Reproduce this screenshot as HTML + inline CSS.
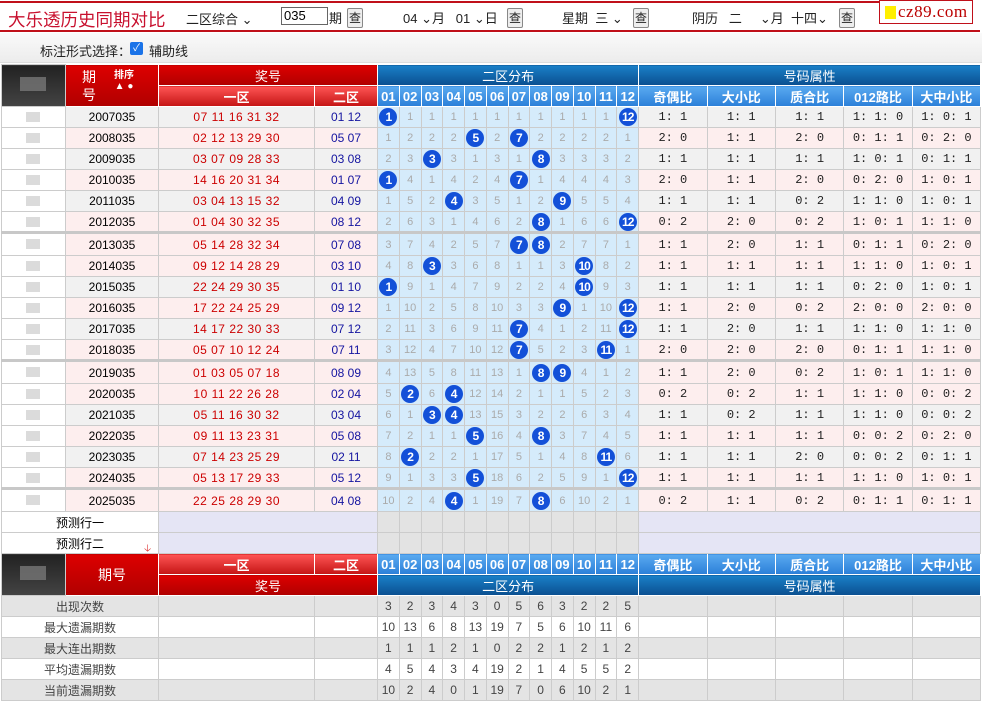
<!DOCTYPE html>
<html><head><meta charset="utf-8"><style>
*{margin:0;padding:0;box-sizing:border-box}
body{width:982px;height:702px;background:#fff;font-family:"Liberation Sans","Noto Sans CJK SC",sans-serif;position:relative;overflow:hidden;font-size:12px;color:#000}
.top{position:absolute;left:0;top:0;width:982px;height:33px;background:#fff}
.rl1{position:absolute;left:0;top:1px;width:880px;height:2px;background:#c0101a}
.rl2{position:absolute;left:0;top:30px;width:980px;height:2px;background:#c0101a}
.t{position:absolute;white-space:nowrap;font-size:13px;color:#222}
.title{position:absolute;left:8px;top:7px;font-size:17.5px;color:#c8102e}
.btn{position:absolute;width:16px;height:20px;border:1px solid #888;border-radius:2px;background:#eee;font-size:12px;text-align:center;line-height:18px;color:#222}
.inp{position:absolute;left:281px;top:7px;width:47px;height:18px;border:1px solid #666;font-size:13px;line-height:16px;padding-left:2px}
.logo{position:absolute;left:879px;top:0;width:94px;height:24px;border:1px solid #c0101a;background:#fff;overflow:hidden}
.logo i{position:absolute;left:5px;top:5px;width:11px;height:13px;background:#ffef00}
.logo span{position:absolute;left:18px;top:1px;font-family:"Liberation Serif",serif;font-size:17px;color:#b00;letter-spacing:0.5px}
.bar2{position:absolute;left:0;top:33px;width:982px;height:30px;background:linear-gradient(#fafafa,#ececec);border-bottom:1px solid #ddd}
.chk{position:absolute;left:130px;top:42px;width:13px;height:13px;background:#1a73e8;border-radius:2px;color:#fff;font-size:10px;line-height:13px;text-align:center}
table{position:absolute;left:1px;top:64px;border-collapse:collapse;table-layout:fixed;width:979px}
td{height:21px;border:1px solid #ccc;text-align:center;padding:0;font-size:12px;white-space:nowrap;overflow:hidden}
.dk{background:linear-gradient(#222,#444);position:relative}
.dk span{position:absolute;left:18px;top:12px;width:26px;height:14px;background:#777;opacity:.8}
.hr{background:linear-gradient(#d00,#b00000);color:#fff;font-size:13px;border-color:#fff}
.hr2{background:linear-gradient(#f55,#c41414);color:#fff;font-size:13px;font-weight:bold;border-color:#fff}
.hb{background:linear-gradient(#1a80c8,#0a4f90);color:#fff;font-size:13px;border-color:#fff}
.hb2{background:linear-gradient(#5aaaf0,#2b7fd8);color:#fff;font-size:13px;font-weight:bold;border-color:#fff}
.qh{position:relative}
.qh .a{position:absolute;left:16px;top:3px;font-size:14px;line-height:18px;color:#fff}
.qh .s{position:absolute;left:48px;top:5px;font-size:10px;font-weight:bold;color:#fff;line-height:11px}
tr.p td{background:#fdeeee}
tr.g td{background:#f1f1f1}
tr.p td:nth-child(n+5):nth-child(-n+16),tr.g td:nth-child(n+5):nth-child(-n+16){background:#d5ebfb;color:#aaa;font-size:11px}
tr.s td{border-top:3px solid #c8c8c8;height:23px}
td.a{background:#fff!important;position:relative}
td.a span{position:absolute;left:24px;top:5px;width:14px;height:10px;background:#ccc;opacity:.7}
.r{color:#c00;letter-spacing:.5px}
.n{color:#1414a0}
b{display:inline-block;width:18px;height:18px;border-radius:50%;background:#1350d8;color:#fff;font-size:12px;line-height:18px;font-weight:bold;vertical-align:middle;letter-spacing:-1px}
.m{font-family:"Liberation Mono",monospace;font-size:12px;color:#222}
.lv{background:#e5e5f5}
.gy{background:#e3e3e3}
tr.w td{background:#fff}
tr.x td{background:#e4e4e4}
tr.w td,tr.x td{color:#444}
</style></head><body>
<div class="top"></div>
<div class="rl1"></div><div class="rl2"></div>
<div class="title">大乐透历史同期对比</div>
<div class="t" style="left:186px;top:9px">二区综合 ⌄</div>
<div class="inp">035</div>
<div class="t" style="left:329px;top:8px">期</div>
<div class="btn" style="left:347px;top:8px">查</div>
<div class="t" style="left:403px;top:8px">04 ⌄月&nbsp;&nbsp;&nbsp;01 ⌄日</div>
<div class="btn" style="left:507px;top:8px">查</div>
<div class="t" style="left:562px;top:8px">星期&nbsp;&nbsp;三 ⌄</div>
<div class="btn" style="left:633px;top:8px">查</div>
<div class="t" style="left:692px;top:8px">阴历&nbsp;&nbsp;&nbsp;二&nbsp;&nbsp;&nbsp;&nbsp;&nbsp;⌄月&nbsp;&nbsp;十四⌄</div>
<div class="btn" style="left:839px;top:8px">查</div>
<div class="logo"><i></i><span>cz89.com</span></div>
<div class="bar2"></div>
<div class="t" style="left:40px;top:41px">标注形式选择：</div>
<div class="chk">✓</div>
<div class="t" style="left:149px;top:41px">辅助线</div>
<table>
<colgroup><col style="width:64px"><col style="width:93px"><col style="width:156px"><col style="width:63px">
<col span="12" style="width:21.75px"><col span="5" style="width:68.4px"></colgroup>
<tr><td class="dk" rowspan="2"><span></span></td><td class="hr qh" rowspan="2"><span class="a">期<br>号</span><span class="s">排序<br>▲ ●</span></td><td class="hr" colspan="2">奖号</td><td class="hb" colspan="12">二区分布</td><td class="hb" colspan="5">号码属性</td></tr>
<tr><td class="hr2">一区</td><td class="hr2">二区</td><td class="hb2">01</td><td class="hb2">02</td><td class="hb2">03</td><td class="hb2">04</td><td class="hb2">05</td><td class="hb2">06</td><td class="hb2">07</td><td class="hb2">08</td><td class="hb2">09</td><td class="hb2">10</td><td class="hb2">11</td><td class="hb2">12</td><td class="hb2">奇偶比</td><td class="hb2">大小比</td><td class="hb2">质合比</td><td class="hb2">012路比</td><td class="hb2">大中小比</td></tr>
<tr class="g"><td class="a"><span></span></td><td>2007035</td><td class="r">07 11 16 31 32</td><td class="n">01 12</td><td><b>1</b></td><td>1</td><td>1</td><td>1</td><td>1</td><td>1</td><td>1</td><td>1</td><td>1</td><td>1</td><td>1</td><td><b>12</b></td><td class="m">1: 1</td><td class="m">1: 1</td><td class="m">1: 1</td><td class="m">1: 1: 0</td><td class="m">1: 0: 1</td></tr>
<tr class="p"><td class="a"><span></span></td><td>2008035</td><td class="r">02 12 13 29 30</td><td class="n">05 07</td><td>1</td><td>2</td><td>2</td><td>2</td><td><b>5</b></td><td>2</td><td><b>7</b></td><td>2</td><td>2</td><td>2</td><td>2</td><td>1</td><td class="m">2: 0</td><td class="m">1: 1</td><td class="m">2: 0</td><td class="m">0: 1: 1</td><td class="m">0: 2: 0</td></tr>
<tr class="g"><td class="a"><span></span></td><td>2009035</td><td class="r">03 07 09 28 33</td><td class="n">03 08</td><td>2</td><td>3</td><td><b>3</b></td><td>3</td><td>1</td><td>3</td><td>1</td><td><b>8</b></td><td>3</td><td>3</td><td>3</td><td>2</td><td class="m">1: 1</td><td class="m">1: 1</td><td class="m">1: 1</td><td class="m">1: 0: 1</td><td class="m">0: 1: 1</td></tr>
<tr class="p"><td class="a"><span></span></td><td>2010035</td><td class="r">14 16 20 31 34</td><td class="n">01 07</td><td><b>1</b></td><td>4</td><td>1</td><td>4</td><td>2</td><td>4</td><td><b>7</b></td><td>1</td><td>4</td><td>4</td><td>4</td><td>3</td><td class="m">2: 0</td><td class="m">1: 1</td><td class="m">2: 0</td><td class="m">0: 2: 0</td><td class="m">1: 0: 1</td></tr>
<tr class="g"><td class="a"><span></span></td><td>2011035</td><td class="r">03 04 13 15 32</td><td class="n">04 09</td><td>1</td><td>5</td><td>2</td><td><b>4</b></td><td>3</td><td>5</td><td>1</td><td>2</td><td><b>9</b></td><td>5</td><td>5</td><td>4</td><td class="m">1: 1</td><td class="m">1: 1</td><td class="m">0: 2</td><td class="m">1: 1: 0</td><td class="m">1: 0: 1</td></tr>
<tr class="p"><td class="a"><span></span></td><td>2012035</td><td class="r">01 04 30 32 35</td><td class="n">08 12</td><td>2</td><td>6</td><td>3</td><td>1</td><td>4</td><td>6</td><td>2</td><td><b>8</b></td><td>1</td><td>6</td><td>6</td><td><b>12</b></td><td class="m">0: 2</td><td class="m">2: 0</td><td class="m">0: 2</td><td class="m">1: 0: 1</td><td class="m">1: 1: 0</td></tr>
<tr class="p s"><td class="a"><span></span></td><td>2013035</td><td class="r">05 14 28 32 34</td><td class="n">07 08</td><td>3</td><td>7</td><td>4</td><td>2</td><td>5</td><td>7</td><td><b>7</b></td><td><b>8</b></td><td>2</td><td>7</td><td>7</td><td>1</td><td class="m">1: 1</td><td class="m">2: 0</td><td class="m">1: 1</td><td class="m">0: 1: 1</td><td class="m">0: 2: 0</td></tr>
<tr class="p"><td class="a"><span></span></td><td>2014035</td><td class="r">09 12 14 28 29</td><td class="n">03 10</td><td>4</td><td>8</td><td><b>3</b></td><td>3</td><td>6</td><td>8</td><td>1</td><td>1</td><td>3</td><td><b>10</b></td><td>8</td><td>2</td><td class="m">1: 1</td><td class="m">1: 1</td><td class="m">1: 1</td><td class="m">1: 1: 0</td><td class="m">1: 0: 1</td></tr>
<tr class="g"><td class="a"><span></span></td><td>2015035</td><td class="r">22 24 29 30 35</td><td class="n">01 10</td><td><b>1</b></td><td>9</td><td>1</td><td>4</td><td>7</td><td>9</td><td>2</td><td>2</td><td>4</td><td><b>10</b></td><td>9</td><td>3</td><td class="m">1: 1</td><td class="m">1: 1</td><td class="m">1: 1</td><td class="m">0: 2: 0</td><td class="m">1: 0: 1</td></tr>
<tr class="p"><td class="a"><span></span></td><td>2016035</td><td class="r">17 22 24 25 29</td><td class="n">09 12</td><td>1</td><td>10</td><td>2</td><td>5</td><td>8</td><td>10</td><td>3</td><td>3</td><td><b>9</b></td><td>1</td><td>10</td><td><b>12</b></td><td class="m">1: 1</td><td class="m">2: 0</td><td class="m">0: 2</td><td class="m">2: 0: 0</td><td class="m">2: 0: 0</td></tr>
<tr class="g"><td class="a"><span></span></td><td>2017035</td><td class="r">14 17 22 30 33</td><td class="n">07 12</td><td>2</td><td>11</td><td>3</td><td>6</td><td>9</td><td>11</td><td><b>7</b></td><td>4</td><td>1</td><td>2</td><td>11</td><td><b>12</b></td><td class="m">1: 1</td><td class="m">2: 0</td><td class="m">1: 1</td><td class="m">1: 1: 0</td><td class="m">1: 1: 0</td></tr>
<tr class="p"><td class="a"><span></span></td><td>2018035</td><td class="r">05 07 10 12 24</td><td class="n">07 11</td><td>3</td><td>12</td><td>4</td><td>7</td><td>10</td><td>12</td><td><b>7</b></td><td>5</td><td>2</td><td>3</td><td><b>11</b></td><td>1</td><td class="m">2: 0</td><td class="m">2: 0</td><td class="m">2: 0</td><td class="m">0: 1: 1</td><td class="m">1: 1: 0</td></tr>
<tr class="p s"><td class="a"><span></span></td><td>2019035</td><td class="r">01 03 05 07 18</td><td class="n">08 09</td><td>4</td><td>13</td><td>5</td><td>8</td><td>11</td><td>13</td><td>1</td><td><b>8</b></td><td><b>9</b></td><td>4</td><td>1</td><td>2</td><td class="m">1: 1</td><td class="m">2: 0</td><td class="m">0: 2</td><td class="m">1: 0: 1</td><td class="m">1: 1: 0</td></tr>
<tr class="p"><td class="a"><span></span></td><td>2020035</td><td class="r">10 11 22 26 28</td><td class="n">02 04</td><td>5</td><td><b>2</b></td><td>6</td><td><b>4</b></td><td>12</td><td>14</td><td>2</td><td>1</td><td>1</td><td>5</td><td>2</td><td>3</td><td class="m">0: 2</td><td class="m">0: 2</td><td class="m">1: 1</td><td class="m">1: 1: 0</td><td class="m">0: 0: 2</td></tr>
<tr class="g"><td class="a"><span></span></td><td>2021035</td><td class="r">05 11 16 30 32</td><td class="n">03 04</td><td>6</td><td>1</td><td><b>3</b></td><td><b>4</b></td><td>13</td><td>15</td><td>3</td><td>2</td><td>2</td><td>6</td><td>3</td><td>4</td><td class="m">1: 1</td><td class="m">0: 2</td><td class="m">1: 1</td><td class="m">1: 1: 0</td><td class="m">0: 0: 2</td></tr>
<tr class="p"><td class="a"><span></span></td><td>2022035</td><td class="r">09 11 13 23 31</td><td class="n">05 08</td><td>7</td><td>2</td><td>1</td><td>1</td><td><b>5</b></td><td>16</td><td>4</td><td><b>8</b></td><td>3</td><td>7</td><td>4</td><td>5</td><td class="m">1: 1</td><td class="m">1: 1</td><td class="m">1: 1</td><td class="m">0: 0: 2</td><td class="m">0: 2: 0</td></tr>
<tr class="g"><td class="a"><span></span></td><td>2023035</td><td class="r">07 14 23 25 29</td><td class="n">02 11</td><td>8</td><td><b>2</b></td><td>2</td><td>2</td><td>1</td><td>17</td><td>5</td><td>1</td><td>4</td><td>8</td><td><b>11</b></td><td>6</td><td class="m">1: 1</td><td class="m">1: 1</td><td class="m">2: 0</td><td class="m">0: 0: 2</td><td class="m">0: 1: 1</td></tr>
<tr class="p"><td class="a"><span></span></td><td>2024035</td><td class="r">05 13 17 29 33</td><td class="n">05 12</td><td>9</td><td>1</td><td>3</td><td>3</td><td><b>5</b></td><td>18</td><td>6</td><td>2</td><td>5</td><td>9</td><td>1</td><td><b>12</b></td><td class="m">1: 1</td><td class="m">1: 1</td><td class="m">1: 1</td><td class="m">1: 1: 0</td><td class="m">1: 0: 1</td></tr>
<tr class="p s"><td class="a"><span></span></td><td>2025035</td><td class="r">22 25 28 29 30</td><td class="n">04 08</td><td>10</td><td>2</td><td>4</td><td><b>4</b></td><td>1</td><td>19</td><td>7</td><td><b>8</b></td><td>6</td><td>10</td><td>2</td><td>1</td><td class="m">0: 2</td><td class="m">1: 1</td><td class="m">0: 2</td><td class="m">0: 1: 1</td><td class="m">0: 1: 1</td></tr>
<tr><td colspan="2" style="text-align:center">预测行一</td><td class="lv" colspan="2"></td><td class="gy"></td><td class="gy"></td><td class="gy"></td><td class="gy"></td><td class="gy"></td><td class="gy"></td><td class="gy"></td><td class="gy"></td><td class="gy"></td><td class="gy"></td><td class="gy"></td><td class="gy"></td><td class="lv" colspan="5"></td></tr>
<tr><td colspan="2" style="text-align:center;position:relative">预测行二<span style="position:absolute;left:142px;top:8px;color:#d33;font-size:10px">🡣</span></td><td class="lv" colspan="2"></td><td class="gy"></td><td class="gy"></td><td class="gy"></td><td class="gy"></td><td class="gy"></td><td class="gy"></td><td class="gy"></td><td class="gy"></td><td class="gy"></td><td class="gy"></td><td class="gy"></td><td class="gy"></td><td class="lv" colspan="5"></td></tr>
<tr><td class="dk" rowspan="2"><span></span></td><td class="hr" rowspan="2" style="font-size:14px">期号</td><td class="hr2">一区</td><td class="hr2">二区</td><td class="hb2">01</td><td class="hb2">02</td><td class="hb2">03</td><td class="hb2">04</td><td class="hb2">05</td><td class="hb2">06</td><td class="hb2">07</td><td class="hb2">08</td><td class="hb2">09</td><td class="hb2">10</td><td class="hb2">11</td><td class="hb2">12</td><td class="hb2">奇偶比</td><td class="hb2">大小比</td><td class="hb2">质合比</td><td class="hb2">012路比</td><td class="hb2">大中小比</td></tr>
<tr><td class="hr" colspan="2">奖号</td><td class="hb" colspan="12">二区分布</td><td class="hb" colspan="5">号码属性</td></tr>
<tr class="x"><td colspan="2">出现次数</td><td></td><td></td><td>3</td><td>2</td><td>3</td><td>4</td><td>3</td><td>0</td><td>5</td><td>6</td><td>3</td><td>2</td><td>2</td><td>5</td><td></td><td></td><td></td><td></td><td></td></tr>
<tr class="w"><td colspan="2">最大遗漏期数</td><td></td><td></td><td>10</td><td>13</td><td>6</td><td>8</td><td>13</td><td>19</td><td>7</td><td>5</td><td>6</td><td>10</td><td>11</td><td>6</td><td></td><td></td><td></td><td></td><td></td></tr>
<tr class="x"><td colspan="2">最大连出期数</td><td></td><td></td><td>1</td><td>1</td><td>1</td><td>2</td><td>1</td><td>0</td><td>2</td><td>2</td><td>1</td><td>2</td><td>1</td><td>2</td><td></td><td></td><td></td><td></td><td></td></tr>
<tr class="w"><td colspan="2">平均遗漏期数</td><td></td><td></td><td>4</td><td>5</td><td>4</td><td>3</td><td>4</td><td>19</td><td>2</td><td>1</td><td>4</td><td>5</td><td>5</td><td>2</td><td></td><td></td><td></td><td></td><td></td></tr>
<tr class="x"><td colspan="2">当前遗漏期数</td><td></td><td></td><td>10</td><td>2</td><td>4</td><td>0</td><td>1</td><td>19</td><td>7</td><td>0</td><td>6</td><td>10</td><td>2</td><td>1</td><td></td><td></td><td></td><td></td><td></td></tr>
</table>
</body></html>
